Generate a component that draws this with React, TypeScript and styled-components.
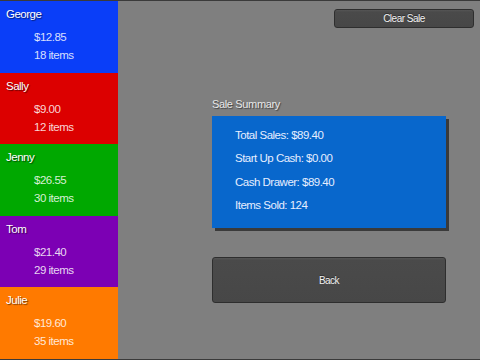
import React from "react";
import styled, { createGlobalStyle } from "styled-components";

const Global = createGlobalStyle`
  html, body { margin: 0; padding: 0; }
  body { font-family: "Liberation Sans", Arial, sans-serif; background: #808080; }
`;

const Screen = styled.div`
  width: 480px;
  height: 360px;
  box-sizing: border-box;
  border-top: 1px solid #3a3a3a;
  border-bottom: 1px solid #3a3a3a;
  background: #7f7f7f;
  display: flex;
  overflow: hidden;
  letter-spacing: -0.5px;
`;

const Sidebar = styled.div`
  width: 118px;
  display: flex;
  flex-direction: column;
`;

const Clerk = styled.div<{ $bg: string }>`
  flex: 1;
  background: ${(p) => p.$bg};
  padding: 5px 6px 0;
  box-sizing: border-box;
`;

const Name = styled.div`
  font-size: 11.5px;
  line-height: 16px;
  color: #ffffff;
  text-shadow: 1px 1px 1px rgba(0, 0, 0, 0.55);
`;

const Details = styled.div`
  margin: 6px 0 0 28px;
  font-size: 11.5px;
  line-height: 18px;
  color: rgba(255, 255, 255, 0.85);
`;

const Main = styled.div`
  flex: 1;
  display: flex;
  flex-direction: column;
`;

const TopBar = styled.div`
  display: flex;
  justify-content: flex-end;
  padding: 8px 6px 0 0;
`;

const Button = styled.button<{ $w: number; $h: number }>`
  width: ${(p) => p.$w}px;
  height: ${(p) => p.$h}px;
  box-sizing: border-box;
  border: 1px solid #2e2e2e;
  border-radius: 3px;
  background: linear-gradient(#555555 0, #4a4a4a 2px, #474747 100%);
  color: #f0f0f0;
  font-family: "Liberation Sans", Arial, sans-serif;
  font-size: 10px;
  letter-spacing: -0.5px;
  text-shadow: 0 -1px 0 rgba(0, 0, 0, 0.4);
  padding: 0;
  cursor: pointer;
`;

const Content = styled.div`
  margin: 0 0 0 94px;
  width: 234px;
  display: flex;
  flex-direction: column;
`;

const Label = styled.div`
  margin-top: 69px;
  font-size: 11px;
  line-height: 14px;
  letter-spacing: -0.35px;
  color: #e8e8e8;
  text-shadow: 1px 1px 1px rgba(0, 0, 0, 0.5);
`;

const Card = styled.div`
  margin-top: 5px;
  height: 112px;
  box-sizing: border-box;
  background: #0867cc;
  box-shadow: 3px 3px 0 #3a3a3a;
  padding: 8px 0 0 23px;
`;

const Line = styled.div`
  font-size: 11.5px;
  line-height: 23.3px;
  color: #e6eeff;
`;

const BackRow = styled.div`
  margin-top: 29px;
`;

const clerks = [
  { name: "George", amount: "$12.85", items: 18, bg: "#0a3ef8" },
  { name: "Sally", amount: "$9.00", items: 12, bg: "#dc0000" },
  { name: "Jenny", amount: "$26.55", items: 30, bg: "#00a800" },
  { name: "Tom", amount: "$21.40", items: 29, bg: "#7c00b4" },
  { name: "Julie", amount: "$19.60", items: 35, bg: "#ff7a00" },
];

const summary = [
  "Total Sales: $89.40",
  "Start Up Cash: $0.00",
  "Cash Drawer: $89.40",
  "Items Sold: 124",
];

export default function App() {
  return (
    <>
      <Global />
      <Screen>
        <Sidebar>
          {clerks.map((c) => (
            <Clerk key={c.name} $bg={c.bg}>
              <Name>{c.name}</Name>
              <Details>
                <div>{c.amount}</div>
                <div>{c.items} items</div>
              </Details>
            </Clerk>
          ))}
        </Sidebar>
        <Main>
          <TopBar>
            <Button $w={140} $h={19}>Clear Sale</Button>
          </TopBar>
          <Content>
            <Label>Sale Summary</Label>
            <Card>
              {summary.map((s) => (
                <Line key={s}>{s}</Line>
              ))}
            </Card>
            <BackRow>
              <Button $w={234} $h={46}>Back</Button>
            </BackRow>
          </Content>
        </Main>
      </Screen>
    </>
  );
}
